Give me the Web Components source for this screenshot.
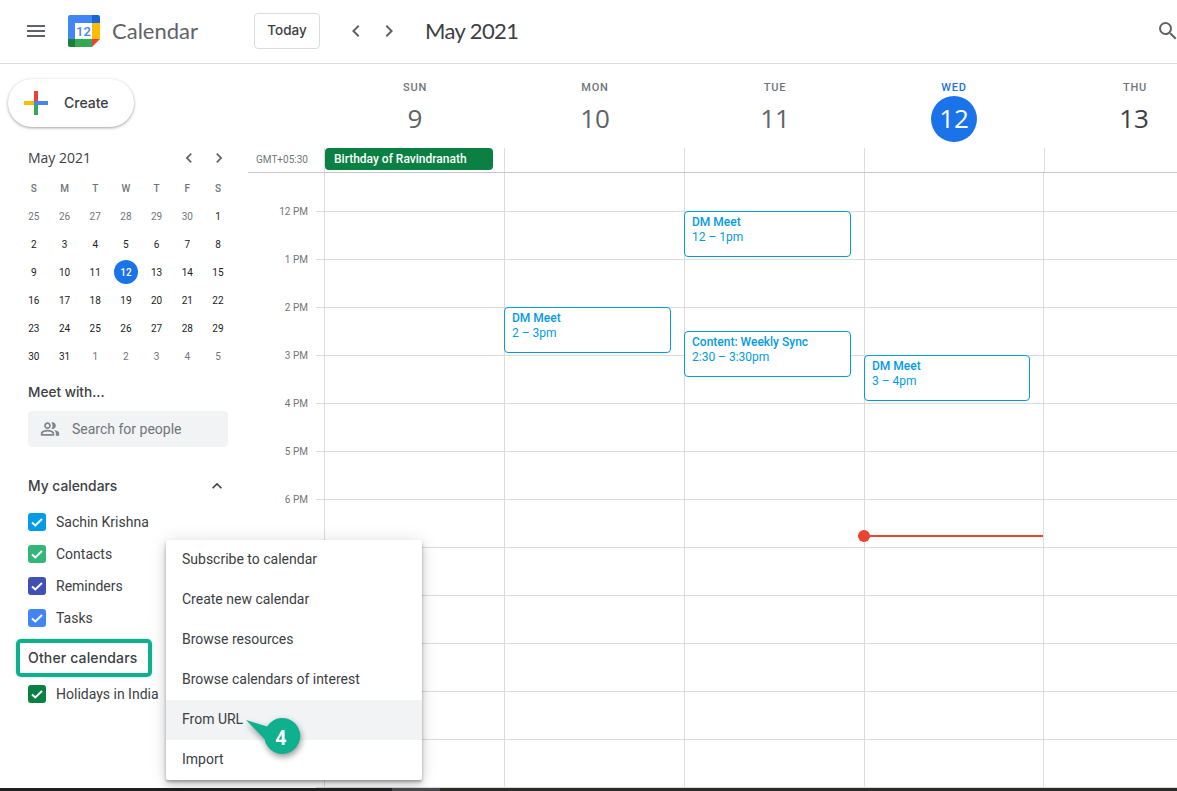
<!DOCTYPE html>
<html>
<head>
<meta charset="utf-8">
<title>Calendar</title>
<style>
  html, body { margin: 0; height: 100%; overflow: hidden; background: #fff; }
</style>
</head>
<body>
<cal-app></cal-app>

<script>
const ROBOTO = `Roboto, 'Liberation Sans', sans-serif`
const GSANS = `'Open Sans', Roboto, sans-serif`
const TITLE = `Lato, 'Open Sans', sans-serif`
const MEDIUM = `Inter, 'Open Sans', sans-serif`

function tpl(html) {
  const t = document.createElement('template')
  t.innerHTML = html
  return t
}

const chevronLeft = `<svg width="24" height="24" viewBox="0 0 24 24"><path fill="currentColor" d="M15.41 7.41 14 6l-6 6 6 6 1.41-1.41L10.83 12z"/></svg>`
const chevronRight = `<svg width="24" height="24" viewBox="0 0 24 24"><path fill="currentColor" d="M8.59 16.59 10 18l6-6-6-6-1.41 1.41L13.17 12z"/></svg>`


const headerTemplate = tpl(`
<style>
  :host { display: flex; align-items: center; height: 61px; padding-bottom: 2px; border-bottom: 1px solid #dadce0; box-sizing: content-box; font-family: ${ROBOTO}; }
  .burger { margin-left: 24px; width: 24px; height: 24px; color: #5f6368; display: block; }
  .logo { margin-left: 20px; width: 32px; height: 32px; display: block; }
  .logo text { font: 500 13px ${ROBOTO}; fill: #4285f4; }
  .name { margin-left: 12px; width: 142px; font: 22px/28px ${TITLE}; color: #5f6368; }
  button { width: 66px; height: 36px; box-sizing: border-box; background: #fff; border: 1px solid #dadce0; border-radius: 4px; font: 500 13.5px ${MEDIUM}; color: #3c4043; padding: 0 0 2px; }
  .nav { margin-left: 24px; display: flex; gap: 9px; color: #5f6368; }
  .nav svg { display: block; }
  .month { margin-left: 24px; font: 22px/28px ${TITLE}; color: #3c4043; letter-spacing: -.6px; }
  .search { margin-left: auto; margin-right: -3px; display: block; color: #5f6368; }
</style>
<svg class="burger" viewBox="0 0 24 24"><path fill="currentColor" d="M3 18h18v-2H3v2zm0-5h18v-2H3v2zm0-7v2h18V6H3z"/></svg>
<svg class="logo" viewBox="0 0 32 32">
  <path fill="#4285f4" d="M2 0h22v8H7v16h-7V2a2 2 0 0 1 2-2z"/>
  <path fill="#1967d2" d="M24 0h6a2 2 0 0 1 2 2v6h-8z"/>
  <path fill="#fbbc04" d="M24 8h8v16h-8z"/>
  <path fill="#34a853" d="M7 24h17v8H7z"/>
  <path fill="#188038" d="M0 24h7v8H2a2 2 0 0 1-2-2z"/>
  <path fill="#ea4335" d="M24 24h8l-8 8z"/>
  <rect x="7" y="8" width="17" height="16" fill="#fff"/>
  <text x="15.5" y="21" text-anchor="middle">12</text>
</svg>
<span class="name">Calendar</span>
<button>Today</button>
<div class="nav">${chevronLeft}${chevronRight}</div>
<span class="month">May 2021</span>
<svg class="search" width="24" height="24" viewBox="0 0 24 24"><path fill="currentColor" d="M15.5 14h-.79l-.28-.27A6.471 6.471 0 0 0 16 9.5 6.5 6.5 0 1 0 9.5 16c1.61 0 3.09-.59 4.23-1.57l.27.28v.79l5 4.99L20.49 19l-4.99-5zm-6 0C7.01 14 5 11.99 5 9.5S7.01 5 9.5 5 14 7.01 14 9.5 11.99 14 9.5 14z"/></svg>
`)

class CalHeader extends HTMLElement {
  constructor() {
    super()
    this.attachShadow({mode:'open'})
    this.shadowRoot.appendChild(headerTemplate.content.cloneNode(true))
  }
}
customElements.define('cal-header', CalHeader)


const createTemplate = tpl(`
<style>
  :host { display: inline-flex; align-items: center; width: 126px; height: 48px; box-sizing: border-box; padding-left: 16px; gap: 16px; border-radius: 24px; background: #fff;
    box-shadow: 0 1px 2px 0 rgba(60,64,67,.3), 0 1px 3px 1px rgba(60,64,67,.15); font: 500 14px ${MEDIUM}; color: #3c4043; }
  svg { display: block; }
  span { margin-top: -2px; }
</style>
<svg width="24" height="24" viewBox="0 0 24 24">
  <path fill="#ea4335" d="M10 0h4v10h-4z"/>
  <path fill="#34a853" d="M10 14h4v10h-4z"/>
  <path fill="#fbbc04" d="M0 10h10v4H0z"/>
  <path fill="#4285f4" d="M10 10h14v4H10z"/>
</svg>
<span>Create</span>
`)

class CreateButton extends HTMLElement {
  constructor() {
    super()
    this.attachShadow({mode:'open'})
    this.shadowRoot.appendChild(createTemplate.content.cloneNode(true))
  }
}
customElements.define('create-button', CreateButton)


const miniTemplate = tpl(`
<style>
  :host { display: block; width: 215px; font-family: ${ROBOTO}; }
  .top { display: flex; align-items: center; height: 24px; padding-left: 9.5px; color: #3c4043; }
  .top span { flex: 1; font: 14px/24px ${GSANS}; }
  .top svg { display: block; width: 20px; height: 20px; margin-right: 10px; color: #5f6368; }
  .top svg:last-child { margin-right: 4.5px; }
  .grid { display: grid; grid-template-columns: repeat(7, 30.7px); grid-auto-rows: 28px; margin-top: 4px; }
  .grid div { display: flex; align-items: center; justify-content: center; font-size: 10px; font-weight: 400; color: #202124; }
  .grid .head { color: #70757a; font-weight: 500; }
  .grid .off { color: #70757a; }
  .grid .now span { display: flex; align-items: center; justify-content: center; width: 24px; height: 24px; border-radius: 50%; background: #1a73e8; color: #fff; font-weight: 500; }
</style>
<div class="top"><span>May 2021</span>${chevronLeft}${chevronRight}</div>
<div class="grid"></div>
`)

class MiniMonth extends HTMLElement {
  constructor() {
    super()
    this.attachShadow({mode:'open'})
    this.shadowRoot.appendChild(miniTemplate.content.cloneNode(true))
    const grid = this.shadowRoot.querySelector('.grid')
    const cells = []
    ;['S','M','T','W','T','F','S'].forEach(d => cells.push(`<div class="head">${d}</div>`))
    ;[25,26,27,28,29,30].forEach(d => cells.push(`<div class="off">${d}</div>`))
    for (let d = 1; d <= 31; d++) {
      if (d == 12) cells.push(`<div class="now"><span>12</span></div>`)
      else cells.push(`<div>${d}</div>`)
    }
    ;[1,2,3,4,5].forEach(d => cells.push(`<div class="off">${d}</div>`))
    grid.innerHTML = cells.join('')
  }
}
customElements.define('mini-month', MiniMonth)


const meetTemplate = tpl(`
<style>
  :host { display: block; }
  h3 { margin: 0; font: 500 13.6px/20px ${MEDIUM}; color: #3c4043; }
  .box { display: flex; align-items: center; gap: 12px; margin-top: 9px; width: 200px; height: 36px; box-sizing: border-box; padding-left: 12px; background: #f1f3f4; border-radius: 4px; font: 14px ${ROBOTO}; color: #70757a; }
  svg { display: block; color: #80868b; }
</style>
<h3>Meet with...</h3>
<div class="box">
  <svg width="20" height="20" viewBox="0 0 24 24"><path fill="currentColor" d="M16.67 13.13C18.04 14.06 19 15.32 19 17v3h4v-3c0-2.18-3.57-3.47-6.33-3.87zM15 12c2.21 0 4-1.79 4-4s-1.79-4-4-4c-.47 0-.91.1-1.33.24C14.5 5.27 15 6.58 15 8s-.5 2.73-1.33 3.76c.42.14.86.24 1.33.24zM9 12c2.21 0 4-1.79 4-4s-1.79-4-4-4-4 1.79-4 4 1.79 4 4 4zm0-6c1.1 0 2 .9 2 2s-.9 2-2 2-2-.9-2-2 .9-2 2-2zM9 13c-2.67 0-8 1.34-8 4v3h16v-3c0-2.66-5.33-4-8-4zm6 5H3v-.99C3.2 16.29 6.3 15 9 15s5.8 1.29 6 2z"/></svg>
  <span>Search for people</span>
</div>
`)

class MeetWith extends HTMLElement {
  constructor() {
    super()
    this.attachShadow({mode:'open'})
    this.shadowRoot.appendChild(meetTemplate.content.cloneNode(true))
  }
}
customElements.define('meet-with', MeetWith)


const checkTemplate = tpl(`
<style>
  :host { display: flex; align-items: center; gap: 10px; height: 32px; font: 14px ${ROBOTO}; color: #3c4043; white-space: nowrap; }
  .box { width: 18px; height: 18px; border-radius: 3px; background: var(--c, #039be5); flex: none; }
  svg { display: block; }
</style>
<div class="box"><svg width="18" height="18" viewBox="0 0 18 18"><path fill="none" stroke="#fff" stroke-width="2" d="M4 9.5l3.3 3L14 6"/></svg></div>
<slot></slot>
`)

class CalCheck extends HTMLElement {
  constructor() {
    super()
    this.attachShadow({mode:'open'})
    this.shadowRoot.appendChild(checkTemplate.content.cloneNode(true))
    this.style.setProperty('--c', this.getAttribute('color'))
  }
}
customElements.define('cal-check', CalCheck)


const sideTemplate = tpl(`
<style>
  :host { display: block; width: 248px; flex: none; box-sizing: border-box; padding-top: 15px; font-family: ${ROBOTO}; }
  create-button { margin-left: 8px; }
  mini-month { margin: 19px 0 0 18.5px; }
  meet-with { margin: 12px 0 0 28px; }
  .mine { display: flex; align-items: center; justify-content: space-between; margin: 29px 21px 0 28px; height: 20px; font: 500 13.8px/20px ${MEDIUM}; color: #3c4043; }
  .mine svg { display: block; color: #3c4043; }
  .list { margin: 10px 0 0 28px; }
  .other { width: 136px; height: 38px; margin: 5px 0 0 16px; box-sizing: border-box; border: 4px solid #0fb08e; border-radius: 5px; padding: 0 0 1px 8px; display: flex; align-items: center; font: 500 14px ${MEDIUM}; letter-spacing: .15px; color: #3c4043; box-shadow: 0 0 2px rgba(15,176,142,.5); white-space: nowrap; }
  .list.last { margin-top: 1px; }
</style>
<create-button></create-button>
<mini-month></mini-month>
<meet-with></meet-with>
<div class="mine"><span>My calendars</span>
  <svg width="20" height="20" viewBox="0 0 24 24"><path fill="currentColor" d="M7.41 15.41 12 10.83l4.59 4.58L18 14l-6-6-6 6z"/></svg>
</div>
<div class="list">
  <cal-check color="#039be5">Sachin Krishna</cal-check>
  <cal-check color="#33b679">Contacts</cal-check>
  <cal-check color="#3f51b5">Reminders</cal-check>
  <cal-check color="#4285f4">Tasks</cal-check>
</div>
<div class="other">Other calendars</div>
<div class="list last">
  <cal-check color="#0b8043">Holidays in India</cal-check>
</div>
`)

class SideBar extends HTMLElement {
  constructor() {
    super()
    this.attachShadow({mode:'open'})
    this.shadowRoot.appendChild(sideTemplate.content.cloneNode(true))
  }
}
customElements.define('side-bar', SideBar)


const dayTemplate = tpl(`
<style>
  :host { display: flex; flex-direction: column; align-items: center; width: 180px; flex: none; font-family: ${ROBOTO}; color: #70757a; }
  .name { margin-top: 18px; font-size: 11px; line-height: 12px; font-weight: 500; letter-spacing: .8px; padding-left: 2px; }
  .num { margin-top: 2px; width: 46px; height: 46px; box-sizing: border-box; padding: 0 0 2px 2px; border-radius: 50%; display: flex; align-items: center; justify-content: center; font: 26px ${GSANS}; color: #5f6368; }
  :host([today]) .name { color: #1a73e8; padding-left: 0; }
  :host([today]) .num { background: #1a73e8; color: #fff; padding-left: 0; }
  :host([future]) .num { color: #3c4043; padding-left: 0; }
</style>
<span class="name"></span>
<span class="num"></span>
`)

class DayHead extends HTMLElement {
  constructor() {
    super()
    this.attachShadow({mode:'open'})
    this.shadowRoot.appendChild(dayTemplate.content.cloneNode(true))
    this.shadowRoot.querySelector('.name').textContent = this.getAttribute('name')
    this.shadowRoot.querySelector('.num').textContent = this.getAttribute('num')
  }
}
customElements.define('day-head', DayHead)


const eventTemplate = tpl(`
<style>
  :host { position: absolute; box-sizing: border-box; width: 167px; height: 46px; background: #fff; border: 1px solid #039be5; border-radius: 4px; padding: 3px 7px; font: 12px/15px ${ROBOTO}; color: #039be5; overflow: hidden; }
  b { display: block; font-weight: 500; }
</style>
<b></b><span></span>
`)

class CalEvent extends HTMLElement {
  constructor() {
    super()
    this.attachShadow({mode:'open'})
    this.shadowRoot.appendChild(eventTemplate.content.cloneNode(true))
    this.shadowRoot.querySelector('b').textContent = this.getAttribute('title')
    this.shadowRoot.querySelector('span').textContent = this.getAttribute('time')
  }
}
customElements.define('cal-event', CalEvent)


const weekTemplate = tpl(`
<style>
  :host { display: flex; flex-direction: column; flex: 1; min-width: 0; overflow: hidden; position: relative; font-family: ${ROBOTO}; }
  .days { display: flex; height: 84px; padding-left: 76px; flex: none; }
  .allday { display: flex; height: 25px; flex: none; box-sizing: border-box; border-bottom: 1px solid #c4c6c9; }
  .gmt { width: 60px; margin-left: 8px; margin-top: 6px; flex: none; font-size: 10px; line-height: 12px; color: #70757a; }
  .adcol { width: 180px; flex: none; box-sizing: border-box; border-left: 1px solid #dadce0; }
  .birthday { width: 168px; height: 22px; box-sizing: border-box; background: #0b8043; color: #fff; border-radius: 4px; font: 500 12px/22px ${ROBOTO}; padding-left: 9px; white-space: nowrap; }
  .grid { position: relative; flex: 1; }
  .row { display: flex; height: 48px; box-sizing: border-box; }
  .row.first { height: 39px; }
  .row .t { width: 60px; flex: none; text-align: right; font-size: 10px; line-height: 12px; color: #70757a; height: 12px; margin-top: 42px; }
  .row .lane { flex: 1; margin-left: 8px; border-bottom: 1px solid #dadce0; }
  .vline { position: absolute; top: 0; bottom: 0; width: 1px; background: #dadce0; }
  .now { position: absolute; height: 2px; background: #ea4335; }
  .dot { position: absolute; width: 12px; height: 12px; border-radius: 50%; background: #ea4335; }
</style>
<div class="days">
  <day-head name="SUN" num="9"></day-head>
  <day-head name="MON" num="10"></day-head>
  <day-head name="TUE" num="11"></day-head>
  <day-head name="WED" num="12" today></day-head>
  <day-head name="THU" num="13" future></day-head>
</div>
<div class="allday">
  <div class="gmt">GMT+05:30</div>
  <div class="adcol" style="margin-left:8px"><div class="birthday">Birthday of Ravindranath</div></div>
  <div class="adcol"></div><div class="adcol"></div><div class="adcol"></div><div class="adcol"></div>
</div>
<div class="grid"></div>
`)

class WeekView extends HTMLElement {
  constructor() {
    super()
    this.attachShadow({mode:'open'})
    this.shadowRoot.appendChild(weekTemplate.content.cloneNode(true))
    const grid = this.shadowRoot.querySelector('.grid')
    let html = ''
    const labels = ['12 PM','1 PM','2 PM','3 PM','4 PM','5 PM','6 PM']
    html += `<div class="row first"><div class="t" style="margin-top:33px">${labels[0]}</div><div class="lane"></div></div>`
    for (let i = 1; i < 13; i++) {
      html += `<div class="row"><div class="t">${labels[i] || ''}</div><div class="lane"></div></div>`
    }
    ;[76, 256, 436, 616, 795].forEach(x => { html += `<div class="vline" style="left:${x}px"></div>` })
    html += `<cal-event title="DM Meet" time="12 – 1pm" style="left:436px;top:38px"></cal-event>`
    html += `<cal-event title="DM Meet" time="2 – 3pm" style="left:256px;top:134px"></cal-event>`
    html += `<cal-event title="Content: Weekly Sync" time="2:30 – 3:30pm" style="left:436px;top:158px"></cal-event>`
    html += `<cal-event title="DM Meet" time="3 – 4pm" style="left:616px;top:182px;width:166px"></cal-event>`
    html += `<div class="now" style="left:616px;width:179px;top:362px"></div><div class="dot" style="left:610px;top:357px"></div>`
    grid.innerHTML = html
  }
}
customElements.define('week-view', WeekView)


const menuTemplate = tpl(`
<style>
  :host { position: absolute; left: 166px; top: 540px; width: 256px; background: #fff; box-shadow: 0 2px 3px rgba(0,0,0,.28), 0 6px 10px 0 rgba(0,0,0,.14), 0 1px 18px 0 rgba(0,0,0,.12); font: 14px ${ROBOTO}; color: #3c4043; border-radius: 2px; }
  div { height: 40px; line-height: 38px; padding-left: 16px; }
  .on { background: #f1f3f4; }
</style>
<div>Subscribe to calendar</div>
<div>Create new calendar</div>
<div>Browse resources</div>
<div>Browse calendars of interest</div>
<div class="on">From URL</div>
<div>Import</div>
`)

class AddMenu extends HTMLElement {
  constructor() {
    super()
    this.attachShadow({mode:'open'})
    this.shadowRoot.appendChild(menuTemplate.content.cloneNode(true))
  }
}
customElements.define('add-menu', AddMenu)


const calloutTemplate = tpl(`
<style>
  :host { position: absolute; left: 244px; top: 718px; width: 60px; height: 42px; font: 700 20px ${ROBOTO}; color: #fff; filter: drop-shadow(1px 3px 3px rgba(0,0,0,.4)); }
  svg { position: absolute; left: 0; top: 0; display: block; }
  span { position: absolute; left: 19px; top: 2px; width: 36px; height: 36px; display: flex; align-items: center; justify-content: center; }
</style>
<svg width="60" height="42" viewBox="0 0 60 42"><path fill="#0fb08e" d="M2 2l21 6.5A18 18 0 1 1 20.5 21z"/></svg>
<span>4</span>
`)

class StepCallout extends HTMLElement {
  constructor() {
    super()
    this.attachShadow({mode:'open'})
    this.shadowRoot.appendChild(calloutTemplate.content.cloneNode(true))
  }
}
customElements.define('step-callout', StepCallout)


const appTemplate = tpl(`
<style>
  :host { display: flex; flex-direction: column; width: 1177px; height: 791px; position: relative; overflow: hidden; background: #fff; }
  .main { display: flex; flex: 1; min-height: 0; }
  .strip { height: 3px; flex: none; display: flex; position: relative; z-index: 1; }
  .strip i { display: block; background: #1f1f1f; width: 392px; }
  .strip i:nth-child(2) { background: #47474b; width: 48px; }
  .strip i:nth-child(3) { background: #2b2a26; flex: 1; }
</style>
<cal-header></cal-header>
<div class="main">
  <side-bar></side-bar>
  <week-view></week-view>
</div>
<add-menu></add-menu>
<step-callout></step-callout>
<div class="strip"><i></i><i></i><i></i></div>
`)

class CalApp extends HTMLElement {
  constructor() {
    super()
    this.attachShadow({mode:'open'})
    this.shadowRoot.appendChild(appTemplate.content.cloneNode(true))
  }
}
customElements.define('cal-app', CalApp)
</script>
</body>
</html>
